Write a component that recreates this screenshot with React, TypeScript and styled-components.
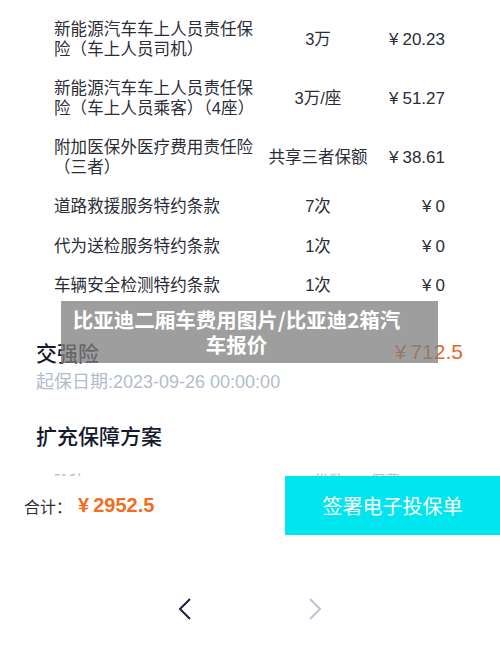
import React from 'react';
import styled, { createGlobalStyle } from 'styled-components';

const GlobalStyle = createGlobalStyle`
  html, body {
    margin: 0;
    padding: 0;
    background: #ffffff;
  }
  body {
    font-family: "Liberation Sans", "Noto Sans CJK SC", sans-serif;
    -webkit-font-smoothing: antialiased;
  }
`;

const Page = styled.div`
  width: 500px;
  height: 666px;
  display: flex;
  flex-direction: column;
  overflow: hidden;
  background: #fff;
`;

const Scroll = styled.div`
  position: relative;
  height: 476px;
  overflow: hidden;
  padding-top: 10px;
  box-sizing: border-box;
`;

const ItemList = styled.div`
  display: flex;
  flex-direction: column;
`;

const ItemRow = styled.div`
  display: grid;
  grid-template-columns: 206px 116px 1fr;
  align-items: center;
  padding: 10px 55px 10px 54px;
  font-size: 16.5px;
  line-height: 19.5px;
  color: #2b2d38;
`;

const ItemName = styled.div`
  letter-spacing: 0.1px;
`;

const ItemAmount = styled.div`
  text-align: center;
`;

const ItemPrice = styled.div`
  text-align: right;
  font-size: 17px;
`;

const Yuan = styled.span`
  margin-right: 4px;
`;

const Section = styled.div`
  padding: 0 37px 0 36px;
`;

const SectionHead = styled.div<{ $top: number }>`
  display: flex;
  justify-content: space-between;
  align-items: center;
  margin-top: ${p => p.$top}px;
  height: 30px;
`;

const SectionTitle = styled.div`
  font-size: 21px;
  font-weight: 500;
  color: #161a2e;
`;

const SectionPrice = styled.div`
  font-size: 21px;
  color: #e4661c;
`;

const SubText = styled.div`
  margin-top: 4px;
  font-size: 18px;
  line-height: 22px;
  color: #b3bccb;
`;

const TableHead = styled.div`
  display: grid;
  grid-template-columns: 1fr 56px 38px;
  margin-top: 20px;
  padding: 0 55px 0 18px;
  font-size: 15px;
  line-height: 22px;
  color: #b3bccb;
`;

const Caption = styled.div`
  position: absolute;
  left: 61px;
  top: 301px;
  width: 377px;
  height: 62px;
  background: rgba(128, 128, 128, 0.76);
  color: #fff;
  font-family: "Noto Sans CJK SC", sans-serif;
  font-weight: 700;
  font-size: 20.5px;
  line-height: 25px;
  text-align: center;
  display: flex;
  align-items: center;
  justify-content: center;
  padding: 0 30px 0 4px;
  box-sizing: border-box;
`;

const Footer = styled.div`
  height: 59px;
  display: flex;
  align-items: stretch;
  background: #fff;
  flex-shrink: 0;
`;

const Total = styled.div`
  flex: 1;
  display: flex;
  align-items: center;
  padding-left: 24px;
  gap: 6px;
`;

const TotalLabel = styled.span`
  font-size: 16px;
  color: #2b2d38;
`;

const TotalValue = styled.span`
  font-size: 20px;
  font-weight: 700;
  color: #f06e1e;
`;

const SignButton = styled.button`
  width: 215px;
  border: none;
  background: #00e6ee;
  color: #fff;
  font-family: "Noto Sans CJK SC", sans-serif;
  font-size: 20px;
  cursor: pointer;
`;

const NavBar = styled.div`
  flex: 1;
  display: flex;
  justify-content: center;
  align-items: flex-start;
  padding-top: 62px;
  gap: 106px;
`;

const NavButton = styled.button<{ $dim?: boolean }>`
  background: none;
  border: none;
  padding: 0;
  width: 24px;
  height: 24px;
  color: ${p => (p.$dim ? '#b9c4d2' : '#1a2140')};
  display: flex;
  align-items: center;
  justify-content: center;
`;

const items = [
  { name: '新能源汽车车上人员责任保险（车上人员司机）', amount: '3万', price: '20.23' },
  { name: '新能源汽车车上人员责任保险（车上人员乘客）（4座）', amount: '3万/座', price: '51.27' },
  { name: '附加医保外医疗费用责任险（三者）', amount: '共享三者保额', price: '38.61' },
  { name: '道路救援服务特约条款', amount: '7次', price: '0' },
  { name: '代为送检服务特约条款', amount: '1次', price: '0' },
  { name: '车辆安全检测特约条款', amount: '1次', price: '0' },
];

const Chevron = ({ dir }: { dir: 'left' | 'right' }) => (
  <svg width="14" height="22" viewBox="0 0 14 22" fill="none">
    <path
      d={dir === 'left' ? 'M12 1 L2 11 L12 21' : 'M2 1 L12 11 L2 21'}
      stroke="currentColor"
      strokeWidth="2"
    />
  </svg>
);

const App: React.FC = () => {
  return (
    <Page>
      <GlobalStyle />
      <Scroll>
        <ItemList>
          {items.map(item => (
            <ItemRow key={item.name}>
              <ItemName>{item.name}</ItemName>
              <ItemAmount>{item.amount}</ItemAmount>
              <ItemPrice>
                <Yuan>¥</Yuan>
                {item.price}
              </ItemPrice>
            </ItemRow>
          ))}
        </ItemList>
        <Section>
          <SectionHead $top={31}>
            <SectionTitle>交强险</SectionTitle>
            <SectionPrice>
              <Yuan>¥</Yuan>712.5
            </SectionPrice>
          </SectionHead>
          <SubText>起保日期:2023-09-26 00:00:00</SubText>
          <SectionHead $top={27}>
            <SectionTitle>扩充保障方案</SectionTitle>
          </SectionHead>
          <TableHead>
            <span>险种</span>
            <span>份数</span>
            <span>保费</span>
          </TableHead>
        </Section>
        <Caption>比亚迪二厢车费用图片/比亚迪2箱汽车报价</Caption>
      </Scroll>
      <Footer>
        <Total>
          <TotalLabel>合计：</TotalLabel>
          <TotalValue>
            <Yuan>¥</Yuan>2952.5
          </TotalValue>
        </Total>
        <SignButton>签署电子投保单</SignButton>
      </Footer>
      <NavBar>
        <NavButton>
          <Chevron dir="left" />
        </NavButton>
        <NavButton $dim>
          <Chevron dir="right" />
        </NavButton>
      </NavBar>
    </Page>
  );
};

export default App;
